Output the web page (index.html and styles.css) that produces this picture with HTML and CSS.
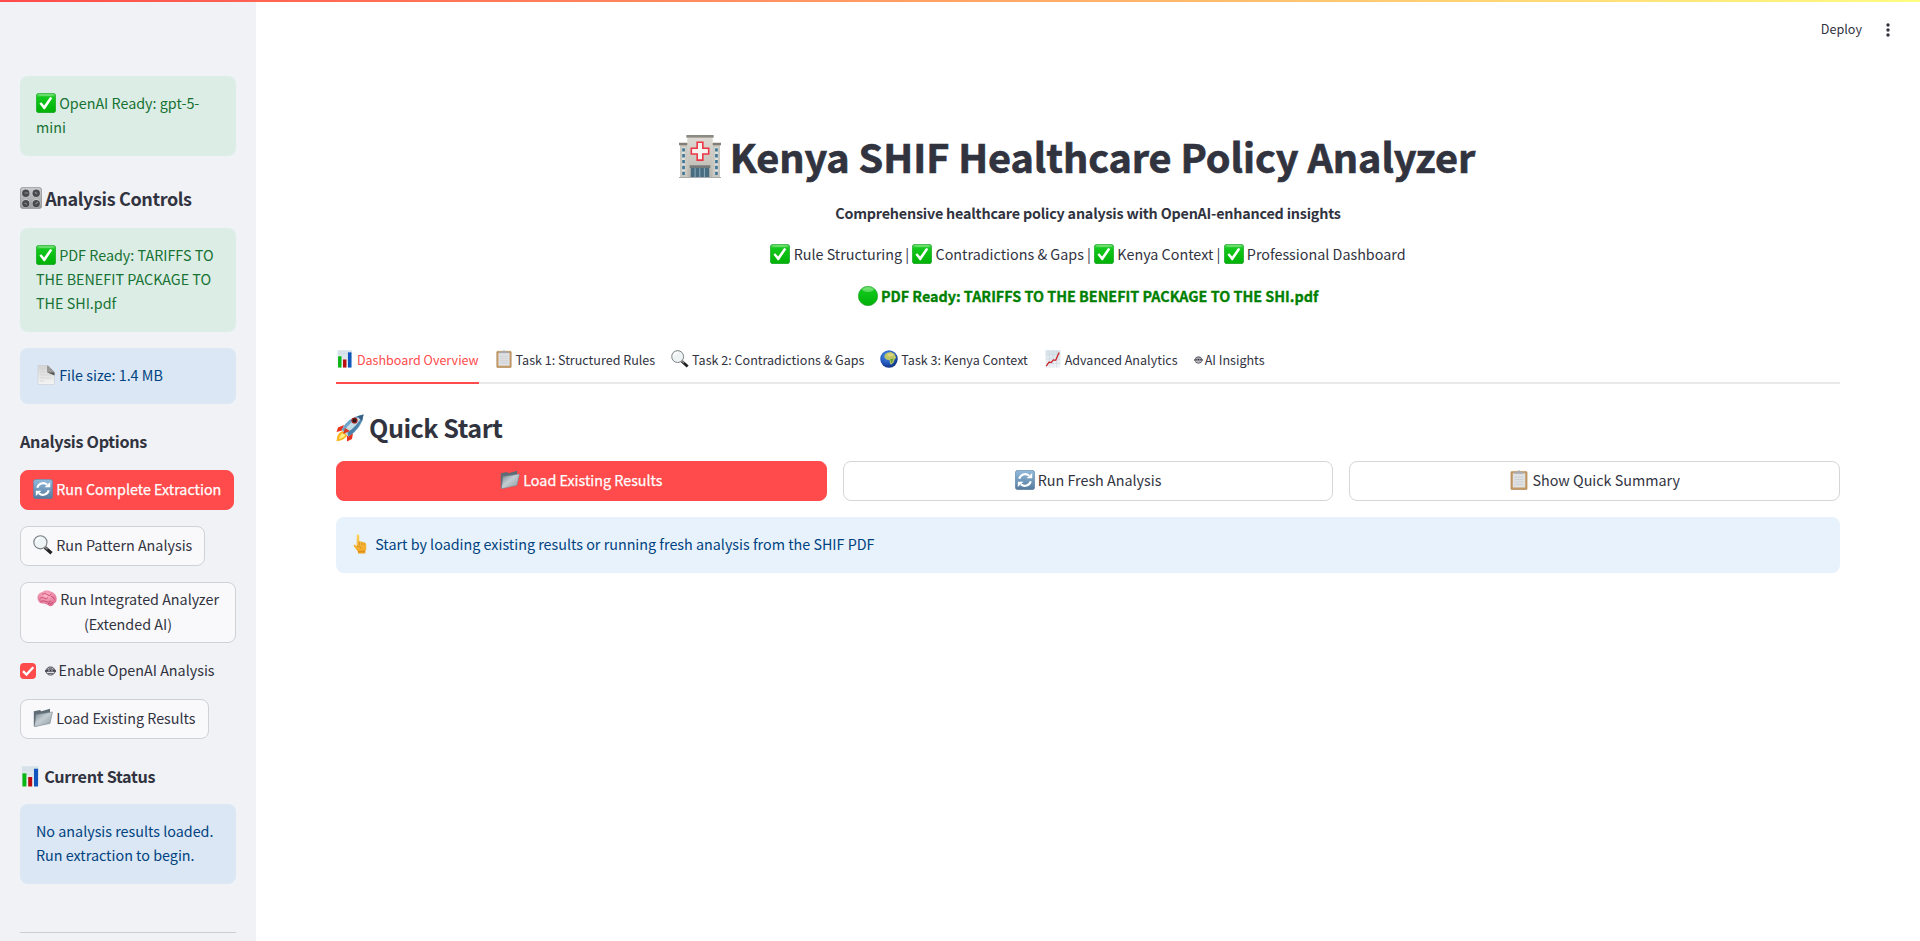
FILE: index.html
```html
<!DOCTYPE html>
<html lang="en">
<head>
<meta charset="utf-8">
<title>Kenya SHIF Healthcare Policy Analyzer</title>
<link rel="stylesheet" href="styles.css">
</head>
<body>
<svg class="sprite" aria-hidden="true">
  <defs>
    <linearGradient id="gGreen" x1="0" y1="0" x2="0" y2="1"><stop offset="0" stop-color="#5fdc62"/><stop offset=".22" stop-color="#12c71b"/><stop offset="1" stop-color="#00b106"/></linearGradient>
    <linearGradient id="gBlue" x1="0" y1="0" x2="0" y2="1"><stop offset="0" stop-color="#91bbdc"/><stop offset="1" stop-color="#557a9e"/></linearGradient>
    <linearGradient id="gSteel" x1="0" y1="0" x2="1" y2="1"><stop offset="0" stop-color="#74828b"/><stop offset=".45" stop-color="#c3cdd2"/><stop offset="1" stop-color="#8b979f"/></linearGradient>
    <linearGradient id="gPage" x1="0" y1="0" x2="0" y2="1"><stop offset="0" stop-color="#d4d4d4"/><stop offset="1" stop-color="#f4f4f4"/></linearGradient>
    <linearGradient id="gPaper" x1="0" y1="0" x2="0" y2="1"><stop offset="0" stop-color="#d5e0e8"/><stop offset="1" stop-color="#f1f5f7"/></linearGradient>
    <linearGradient id="gStone" x1="0" y1="0" x2="0" y2="1"><stop offset="0" stop-color="#dcdad3"/><stop offset="1" stop-color="#b9b7af"/></linearGradient>
    <radialGradient id="gSea" cx=".4" cy=".3" r=".75"><stop offset="0" stop-color="#4c8ee8"/><stop offset=".6" stop-color="#2358bd"/><stop offset="1" stop-color="#102c73"/></radialGradient>
    <radialGradient id="gBrain" cx=".45" cy=".3" r=".8"><stop offset="0" stop-color="#ffb5c8"/><stop offset="1" stop-color="#d95f85"/></radialGradient>
    <linearGradient id="gHand" x1="0" y1="0" x2="0" y2="1"><stop offset="0" stop-color="#ffd65c"/><stop offset="1" stop-color="#f0a01d"/></linearGradient>
    <linearGradient id="gKnob" x1="0" y1="0" x2="0" y2="1"><stop offset="0" stop-color="#c9cacb"/><stop offset="1" stop-color="#9b9c9e"/></linearGradient>
  </defs>
  <symbol id="check" viewBox="0 0 20 20"><rect x=".3" y=".3" width="19.4" height="19.4" rx="2.8" fill="url(#gGreen)" stroke="#119a22" stroke-width=".6"/><path d="M1.5 2.2Q1.7 1.2 3 1.2H17Q18.300 1.200 18.500 2.200Q10 4 1.500 2.200Z" fill="#8fe98e" opacity=".55"/><path d="M3.400 10.600 5.300 9.300 8.100 12.600 14.100 3.900 16.400 4.900 8.900 16.200 7.700 16.200Z" fill="#fff"/></symbol>
  <symbol id="dot" viewBox="0 0 20 20"><circle cx="10" cy="10" r="9.700" fill="url(#gGreen)" stroke="#0f9a1e" stroke-width=".6"/><ellipse cx="10" cy="3.600" rx="5.500" ry="2.300" fill="#a6f0a3" opacity=".5"/></symbol>
  <symbol id="knobs" viewBox="0 0 22 22"><rect x=".4" y=".4" width="21.200" height="21.200" rx="2.500" fill="url(#gKnob)" stroke="#8a8b8d" stroke-width=".7"/><g fill="#d2d3d4"><circle cx="5.800" cy="6" r="4.200"/><circle cx="16.200" cy="6" r="4.200"/><circle cx="5.800" cy="16.400" r="4.200"/><circle cx="16.200" cy="16.400" r="4.200"/></g><g fill="#47494c"><circle cx="5.800" cy="6.200" r="3.700"/><circle cx="16.200" cy="6.200" r="3.700"/><circle cx="5.800" cy="16.600" r="3.700"/><circle cx="16.200" cy="16.600" r="3.700"/></g><path d="M4.500 6H8.300M15 5 17 7M4.500 16 7 17.200M15.500 17.200 18 14.800" stroke="#8d8f91" stroke-width="1.100"/></symbol>
  <symbol id="page" viewBox="0 0 20 20"><path d="M2 .5H12L18.500 7V19.500H2Z" fill="url(#gPage)" stroke="#c6c9cc" stroke-width=".5"/><path d="M11.500.5 18.500 7.500 18.500 10.500 11.500 7.500Z" fill="#555"/><path d="M11.500.5V7.500H18.500Z" fill="#999"/><path d="M4 4H9M4 7H9M4 10H15M4 13H15M4 16H8" stroke="#d0d0d0" stroke-width=".7"/></symbol>
  <symbol id="refresh" viewBox="0 0 20 20"><rect x=".3" y=".3" width="19.400" height="19.400" rx="2.800" fill="url(#gBlue)" stroke="#5c7f9f" stroke-width=".6"/><path d="M4.300 8.800A6 6 0 0 1 14 5.600M15.700 11.200A6 6 0 0 1 6 14.400" fill="none" stroke="#fff" stroke-width="2.100"/><path d="M11.500 8.300H17.200V3ZM8.500 11.700H2.800V17Z" fill="#fff"/></symbol>
  <symbol id="lens" viewBox="0 0 20 20"><path d="M12 12.500 18.500 18.300" stroke="#222" stroke-width="3.200"/><path d="M11.800 11.800 14.500 14.300" stroke="#8a8a8a" stroke-width="1.600"/><circle cx="7.400" cy="7.300" r="6.600" fill="#eef3f4" stroke="#777e80" stroke-width="1.100"/><path d="M3.300 7A4.300 4.300 0 0 1 7.500 2.900" fill="none" stroke="#fff" stroke-width="1.300"/></symbol>
  <symbol id="brain" viewBox="0 0 20 20"><path d="M1 11C-.5 7 2 3.500 5.500 3 8 1 12 1.400 14 2.800 17.500 3.500 20 7 19.600 10.500 19.600 13 18 14 17 14.500 16 17.500 13 17.600 11.500 16.500 10 15.500 9 14.500 6.500 14.500 4 14.700 1.700 13.500 1 11Z" fill="url(#gBrain)"/><path d="M2.500 10Q4.500 7 7 9T11 8.500M5 5.500Q8 3 10 5.500T14.500 5M3.500 12.500Q7 11 9 12.500T14 12M14 7.500Q17 7.500 17.500 10.500M11 14.500Q14 15 16 13.500" fill="none" stroke="#c54b74" stroke-width=".9"/></symbol>
  <symbol id="robot" viewBox="0 0 11 10"><ellipse cx="5.500" cy="5" rx="4.100" ry="4" fill="none" stroke="#31333f" stroke-width=".9"/><path d="M2 3.400H9V5.700H2Z" fill="#31333f"/><path d="M.5 3.800V6.200M10.500 3.800V6.200M3 7.400H8M3.500 2.300H7.500" stroke="#31333f" stroke-width=".8"/><path d="M3.300 4.600H4.700M6.300 4.600H7.700" stroke="#fff" stroke-width=".7"/></symbol>
  <symbol id="folder" viewBox="0 0 20 20"><path d="M.8 18V3.200L7 2 8.300 3.300 17 .8V5L4 18.500Z" fill="#5f6c75"/><path d="M3 6.500 19.500 4 17 15.500 1.400 18.700Z" fill="url(#gSteel)" stroke="#74828a" stroke-width=".5"/></symbol>
  <symbol id="bars" viewBox="0 0 20 20"><rect x="1.700" y=".3" width="16" height="19.400" fill="url(#gPaper)"/><path d="M2 4H18M2 8H18M2 12H18M2 16H18" stroke="#cbd8e1" stroke-width=".5"/><rect x="2.300" y="7" width="3.800" height="12.500" fill="#09b613"/><rect x="7.800" y="10.500" width="3.800" height="9" fill="#bc0d12"/><rect x="13.300" y="2.600" width="3.900" height="16.900" fill="#0f55bd"/></symbol>
  <symbol id="clip" viewBox="0 0 20 20"><rect x="1.900" y="1.400" width="16.200" height="18.300" rx="1" fill="#c39a66" stroke="#a8824f" stroke-width=".5"/><rect x="3.800" y="3.300" width="12.400" height="14.200" fill="#dfe1e3"/><path d="M5.500 7H14.500M5.500 9.500H14.500M5.500 12H14.500M5.500 14.500H14.500" stroke="#c4c6c9" stroke-width=".6"/><path d="M5.500 3.700V2H8.500Q8.600.2 10 .2T11.500 2H14.500V3.700Z" fill="#a9adb1"/></symbol>
  <symbol id="globe" viewBox="0 0 20 20"><circle cx="10" cy="10" r="9.700" fill="url(#gSea)"/><path d="M5.500 5Q8 2 12 2.200L16 4.300 18 8.500 16.300 10.200 15 14 12.300 16.500 11 14.500 10.700 11.300 7.200 10.500 4.800 8Z" fill="#bdc862"/><path d="M8 4 14 4.300 15 6.500 9 7Z" fill="#e1d386"/><path d="M11.500 10 15 9.500 14 13 12.300 15Z" fill="#65a345"/></symbol>
  <symbol id="trend" viewBox="0 0 20 20"><rect x="1.700" y=".3" width="16.600" height="19.400" fill="url(#gPaper)"/><path d="M2 5H18M2 10H18M2 15H18M6 .5V19.500M10 .5V19.500M14 .5V19.500" stroke="#c4d1db" stroke-width=".5"/><path d="M2.500 18 5.500 13.500 8 13.800 10.500 11 13 11.500 16.800 2.800" fill="none" stroke="#cb282d" stroke-width="1.500"/></symbol>
  <symbol id="rocket" viewBox="0 0 28 28"><path d="M8 11 2 13.500.5 18 6 16.500ZM17 19 16 25 11 27.500 11 22Z" fill="#e7331e"/><path d="M6.500 17Q1 19 .5 27.200 7 27 11.500 21.500Z" fill="#ffb51e"/><path d="M7 19Q4 20.500 3 25 7 24 9.500 21.500Z" fill="#fff08a"/><path d="M5.500 15.500Q12 3 27.500.4 27 13 12.500 22.500Z" fill="#6ea5c9"/><path d="M8 17Q15 6 27.500.4 26 12 12.500 22.500Z" fill="#c5dbe6"/><path d="M11.500 18.500Q21 12 27.500.4 25 14 12.500 22.500Z" fill="#4b82ab"/><path d="M21 2.200 27.500.4 26 7Z" fill="#365f83"/><circle cx="18.500" cy="6.500" r="3.100" fill="#a81e1a"/><circle cx="18.500" cy="6.500" r="1.900" fill="#261a1d"/><path d="M9 14 7 20 14 17Z" fill="#d93720"/></symbol>
  <symbol id="hand" viewBox="0 0 20 20"><path d="M4.700 10.500V2Q4.700.3 6 .3T7.300 2V7.500Q8.800 6.700 9.800 7.800 11.400 7.300 12.100 8.600 14.300 8.500 14.300 10.500V13.500Q14.300 16.500 13.300 17.500V19.600H6V17.800L2 12.500Q1 10.500 2.700 10.500L4.700 12Z" fill="url(#gHand)"/><path d="M7.300 7.500V11M9.800 8V11.500M12.100 8.800V11.500M5 12.500Q8 11 9 14M6 17.700H13" fill="none" stroke="#ca7c16" stroke-width=".7"/></symbol>
  <symbol id="hospital" viewBox="0 0 43 44"><path d="M1 9H9V43H1ZM34 9H42V43H34Z" fill="#c8c7c0"/><path d="M0 8H9V10.500H0ZM34 8H43V10.500H34Z" fill="#827e76"/><rect x="8.500" y="1.500" width="26" height="41.500" fill="url(#gStone)"/><path d="M7.500 0H35.500V2.700H7.500Z" fill="#8d8a82"/><path d="M12 33H31V43H12Z" fill="#496c81"/><path d="M11 31H32V33.800H11Z" fill="#76797a"/><path d="M16.500 34V43M21.300 34V43M26 34V43" stroke="#8db0c3" stroke-width="1"/><path d="M3 12.500H6.300V41H3ZM36.700 12.500H40V41H36.700Z" fill="#e3e1dc"/><g fill="#3f7698"><path d="M3.300 13.500H6V17H3.300ZM3.300 19.500H6V23H3.300ZM3.300 25.500H6V29H3.300ZM3.300 31.500H6V35H3.300ZM3.300 37.500H6V41H3.300ZM37 13.500H39.700V17H37ZM37 19.500H39.700V23H37ZM37 25.500H39.700V29H37ZM37 31.500H39.700V35H37ZM37 37.500H39.700V41H37Z"/></g><path d="M18.600 7.400H24.400V13.600H30.400V19.400H24.400V25.700H18.600V19.400H12.600V13.600H18.600Z" fill="#f5f3f0" stroke="#ed3345" stroke-width="1.600"/><path d="M0 43H43V44H0Z" fill="#aaa"/></symbol>
</svg>

<div class="app">
  <div class="decoration"></div>
  <aside class="sidebar">
    <div class="alert success"><svg class="ico"><use href="#check"/></svg><span>OpenAI Ready: gpt-5-<br>mini</span></div>
    <h2 class="side-title"><svg class="ico ico-lg"><use href="#knobs"/></svg><span>Analysis Controls</span></h2>
    <div class="alert success"><svg class="ico"><use href="#check"/></svg><span>PDF Ready: TARIFFS TO<br>THE BENEFIT PACKAGE TO<br>THE SHI.pdf</span></div>
    <div class="alert info"><svg class="ico"><use href="#page"/></svg><span>File size: 1.4 MB</span></div>
    <h3 class="side-sub options">Analysis Options</h3>
    <button class="btn primary"><svg class="ico"><use href="#refresh"/></svg><span>Run Complete Extraction</span></button>
    <button class="btn"><svg class="ico"><use href="#lens"/></svg><span>Run Pattern Analysis</span></button>
    <button class="btn tall"><svg class="ico"><use href="#brain"/></svg><span>Run Integrated Analyzer<br>(Extended AI)</span></button>
    <label class="check-row"><span class="box"><svg viewBox="0 0 16 16"><path d="M3 8.200 6.500 11.500 13.300 4.200" fill="none" stroke="#fff" stroke-width="2.400"/></svg></span><svg class="robot"><use href="#robot"/></svg><span class="check-label">Enable OpenAI Analysis</span></label>
    <button class="btn"><svg class="ico"><use href="#folder"/></svg><span>Load Existing Results</span></button>
    <h3 class="side-sub status"><svg class="ico ico-md"><use href="#bars"/></svg><span>Current Status</span></h3>
    <div class="alert info">No analysis results loaded.<br>Run extraction to begin.</div>
    <hr class="rule">
  </aside>
  <main class="main">
    <header class="toolbar"><span class="deploy">Deploy</span><svg class="kebab" viewBox="0 0 16 16"><g fill="#31333f"><circle cx="8" cy="3" r="1.700"/><circle cx="8" cy="8" r="1.700"/><circle cx="8" cy="13" r="1.700"/></g></svg></header>
    <section class="hero">
      <h1><svg class="hospital"><use href="#hospital"/></svg><span>Kenya SHIF Healthcare Policy Analyzer</span></h1>
      <p class="strong">Comprehensive healthcare policy analysis with OpenAI-enhanced insights</p>
      <p class="features"><svg class="ico"><use href="#check"/></svg><span>Rule Structuring | </span><svg class="ico"><use href="#check"/></svg><span>Contradictions &amp; Gaps | </span><svg class="ico"><use href="#check"/></svg><span>Kenya Context | </span><svg class="ico"><use href="#check"/></svg><span>Professional Dashboard</span></p>
      <p class="ready"><svg class="ico"><use href="#dot"/></svg><span>PDF Ready: TARIFFS TO THE BENEFIT PACKAGE TO THE SHI.pdf</span></p>
    </section>
    <nav class="tabs">
      <a class="tab active"><svg class="ico"><use href="#bars"/></svg><span>Dashboard Overview</span></a>
      <a class="tab"><svg class="ico"><use href="#clip"/></svg><span>Task 1: Structured Rules</span></a>
      <a class="tab"><svg class="ico"><use href="#lens"/></svg><span>Task 2: Contradictions &amp; Gaps</span></a>
      <a class="tab"><svg class="ico"><use href="#globe"/></svg><span>Task 3: Kenya Context</span></a>
      <a class="tab"><svg class="ico"><use href="#trend"/></svg><span>Advanced Analytics</span></a>
      <a class="tab"><svg class="robot"><use href="#robot"/></svg><span>AI Insights</span></a>
    </nav>
    <h2 class="quick"><svg class="rocket"><use href="#rocket"/></svg><span>Quick Start</span></h2>
    <div class="actions">
      <button class="btn primary"><svg class="ico"><use href="#folder"/></svg><span>Load Existing Results</span></button>
      <button class="btn"><svg class="ico"><use href="#refresh"/></svg><span>Run Fresh Analysis</span></button>
      <button class="btn"><svg class="ico"><use href="#clip"/></svg><span>Show Quick Summary</span></button>
    </div>
    <div class="alert info"><svg class="ico"><use href="#hand"/></svg><span>Start by loading existing results or running fresh analysis from the SHIF PDF</span></div>
  </main>
</div>
</body>
</html>
```
FILE: styles.css
```css
* { box-sizing: border-box; }
body {
  margin: 0;
  background: #fff;
  color: #31333f;
  font-family: "Noto Sans CJK SC", "Noto Sans", sans-serif;
  font-size: 14.34px;
  line-height: 24px;
}
.sprite { position: absolute; width: 0; height: 0; }
h1, h2, h3, p { margin: 0; }
.app { position: relative; display: flex; height: 941px; overflow: hidden; }
.decoration { position: absolute; inset: 0 0 auto; height: 2px; background: linear-gradient(90deg, #ff4b4b, #fffd80); }
.sidebar {
  width: 256px;
  flex: none;
  padding: 76px 20px 0;
  background: #f0f2f6;
  display: flex;
  flex-direction: column;
  align-items: flex-start;
  gap: 16px;
}
.ico { width: 20px; height: 20px; margin-right: 3.2px; vertical-align: -4px; flex: none; }
.ico-lg { width: 22px; height: 22px; vertical-align: -3px; }
.ico-md { width: 21px; height: 21px; vertical-align: -4px; }
.robot { width: 11px; height: 10px; margin-right: 2.500px; flex: none; }
.alert { align-self: stretch; padding: 15px 16px 17px; border-radius: 8px; }
.success { background: #dcede6; color: #177233; }
.info { background: #dbe7f4; color: #004280; }
.side-title { height: 40px; padding-top: 14px; font-size: 18px; font-weight: 600; letter-spacing: -0.37px; white-space: nowrap; }
.side-sub { font-size: 16.200px; font-weight: 600; letter-spacing: -0.31px; white-space: nowrap; }
.options { height: 34px; padding-top: 9px; }
.status { height: 33px; padding-top: 9px; }
.btn {
  display: flex;
  align-items: center;
  justify-content: center;
  height: 40px;
  padding: 0 12px 2px;
  border: 1px solid #d0d1d6;
  border-radius: 8px;
  background: #f9f9fb;
  color: #31333f;
  font: inherit;
  white-space: nowrap;
}
.primary { background: #ff4b4b; border-color: #ff4b4b; color: #fff; -webkit-text-stroke: .25px #fff; }
.tall { display: block; align-self: stretch; height: 61px; line-height: 25px; padding-bottom: 4px; }
.check-row { display: flex; align-items: center; height: 24px; white-space: nowrap; }
.check-label { padding-bottom: 2px; }
.box { width: 16px; height: 16px; margin-right: 9px; border-radius: 4px; background: #ff4b4b; }
.box svg { display: block; }
.rule { align-self: stretch; margin: 32px 0 0; border: 0; border-top: 1px solid #cccdd3; }

.main { flex: 1; padding: 0 80px; }
.toolbar { display: flex; justify-content: flex-end; align-items: center; height: 60px; margin-right: -56px; font-size: 12.600px; }
.deploy { padding-bottom: 2px; }
.kebab { width: 16px; height: 16px; margin-left: 18px; }
.hero { padding-top: 67px; text-align: center; }
h1 { height: 60px; padding-right: 21.600px; font-size: 39.600px; font-weight: 700; line-height: 57px; letter-spacing: -0.05px; white-space: nowrap; -webkit-text-stroke: .7px #31333f; }
.hospital { width: 42px; height: 43px; margin-right: 8.600px; vertical-align: -5px; -webkit-text-stroke: 0; }
.hero p { height: 24px; white-space: nowrap; }
.hero .strong { margin-top: 14px; font-weight: 600; letter-spacing: -0.2px; }
.hero .features { margin-top: 17px; }
.hero .ready { margin-top: 18px; color: #008000; font-weight: 700; -webkit-text-stroke: .3px #008000; }
.tabs { display: flex; gap: 16px; height: 44px; margin-top: 32px; border-bottom: 2px solid #e9e9eb; font-size: 12.550px; }
.tab { display: flex; align-items: center; height: 44px; padding-bottom: 2px; border-bottom: 2px solid transparent; white-space: nowrap; }
.tab .ico { width: 18px; height: 18px; margin: 0 2.900px 2px 0; }
.tab .robot { width: 9px; margin-right: 2px; }
.tab.active { color: #ff4b4b; border-color: #ff4b4b; }
.quick { height: 77px; padding-top: 23px; font-size: 25.200px; font-weight: 600; line-height: 40px; letter-spacing: -0.5px; }
.rocket { width: 28px; height: 28px; margin-right: 5px; vertical-align: -4px; }
.actions { display: grid; grid-template-columns: repeat(3, 1fr); gap: 16px; margin-bottom: 16px; }
.actions .btn { background: #fff; border-color: #d6d6d9; }
.actions .primary { background: #ff4b4b; border-color: #ff4b4b; }
.main .info { background: #e8f2fc; }
```
